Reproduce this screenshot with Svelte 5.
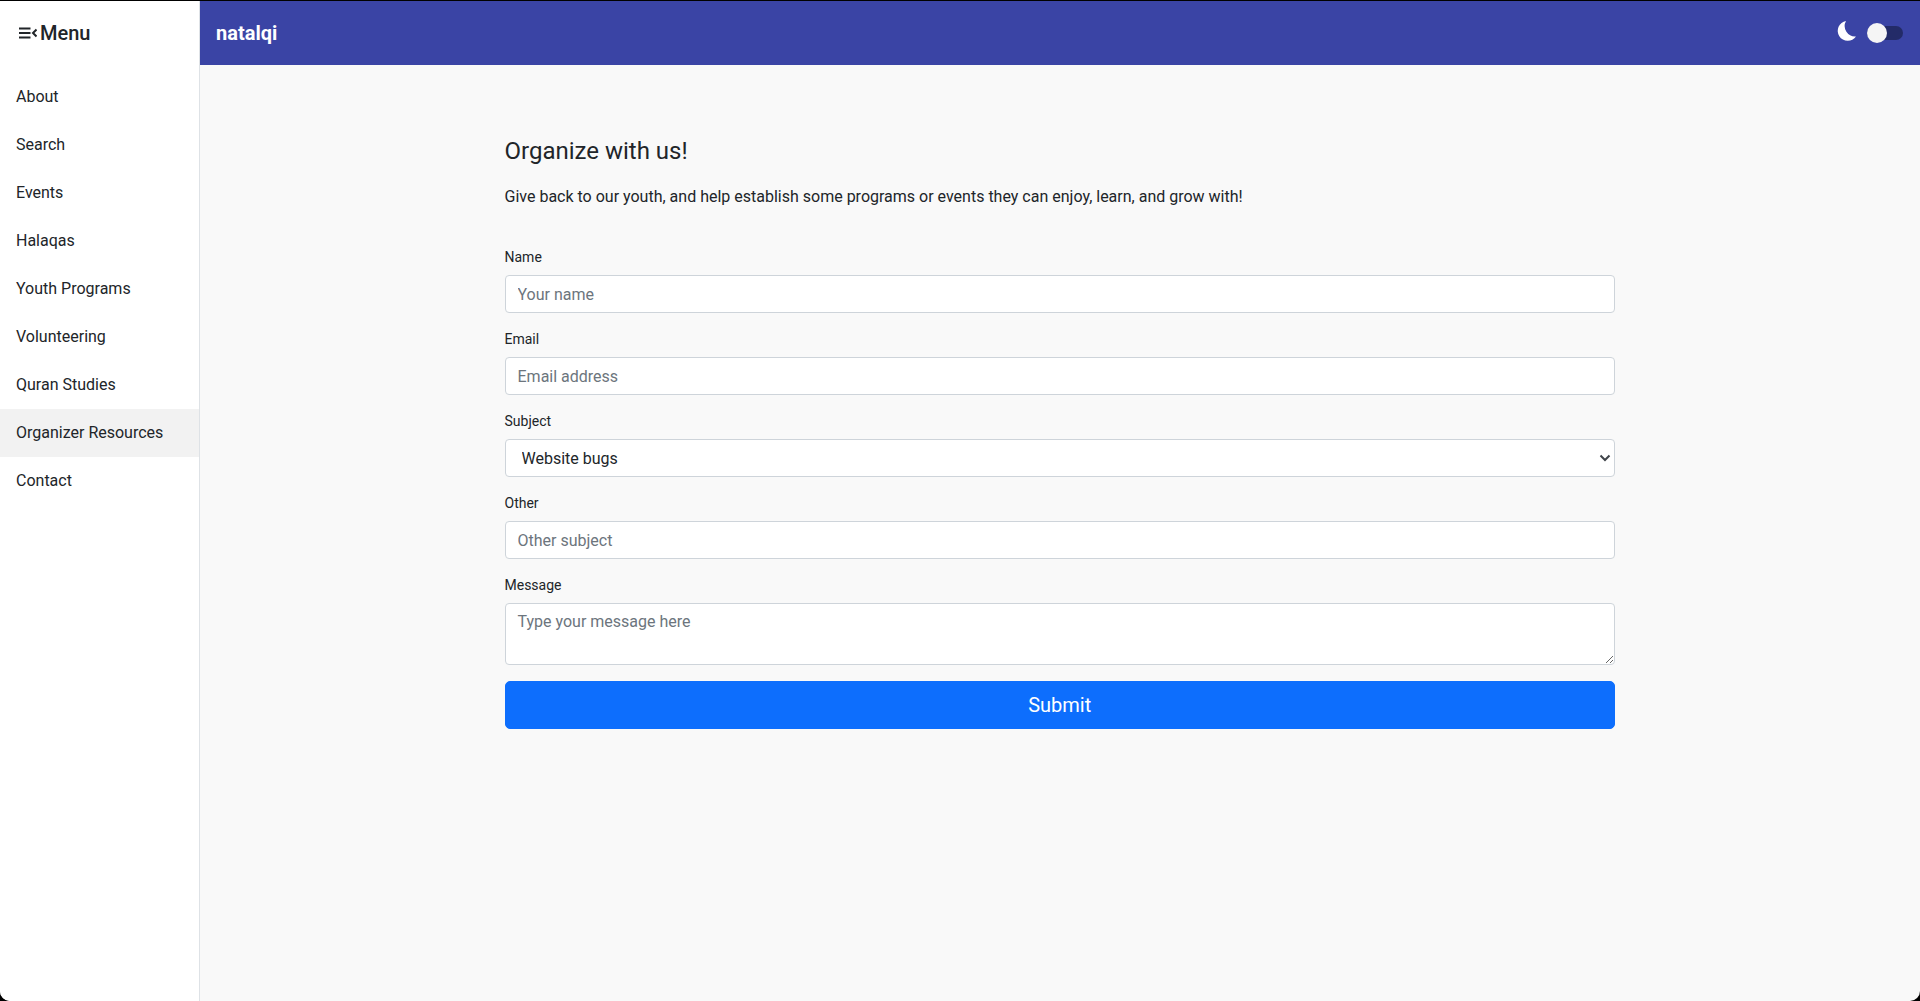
<script lang="ts">
  const links = ['About', 'Search', 'Events', 'Halaqas', 'Youth Programs', 'Volunteering', 'Quran Studies', 'Organizer Resources', 'Contact'];
  const active = 'Organizer Resources';
</script>

<div class="shell">
  <aside class="sidebar">
    <div class="menu-head">
      <svg width="18" height="12" viewBox="0 0 18 12" aria-hidden="true">
        <path d="M0 1.500h11.500M0 6h11.500M0 10.500h11.500M17.500 2.500 14 6l3.500 3.500" fill="none" stroke="#212529" stroke-width="2" />
      </svg>
      <span>Menu</span>
    </div>
    <nav>
      {#each links as link}
        <a href="#{link}" class="nav-link" class:active={link === active}>{link}</a>
      {/each}
    </nav>
  </aside>

  <div class="main">
    <header class="topbar">
      <span class="brand">natalqi</span>
      <div class="mode">
        <svg class="moon" width="20" height="20" viewBox="0 0 20 20" aria-hidden="true">
          <path d="M9 0A10 10 0 1 0 19 15.500 10.500 10.500 0 0 1 9 0z" fill="#fff" />
        </svg>
        <span class="switch"><span class="knob"></span></span>
      </div>
    </header>

    <main class="content">
      <h1>Organize with us!</h1>
      <p>Give back to our youth, and help establish some programs or events they can enjoy, learn, and grow with!</p>

      <form onsubmit={(e) => e.preventDefault()}>
        <label for="name">Name</label>
        <input id="name" type="text" placeholder="Your name" />

        <label for="email">Email</label>
        <input id="email" type="email" placeholder="Email address" />

        <label for="subject">Subject</label>
        <div class="select-wrap">
          <select id="subject">
            <option>Website bugs</option>
            <option>Programs</option>
            <option>Events</option>
          </select>
          <svg class="chevron" width="12" height="8" viewBox="0 0 12 8" aria-hidden="true">
            <path d="M1.500 1.500 6 6l4.500-4.500" fill="none" stroke="#3f444a" stroke-width="2" />
          </svg>
        </div>

        <label for="other">Other</label>
        <input id="other" type="text" placeholder="Other subject" />

        <label for="message">Message</label>
        <textarea id="message" placeholder="Type your message here"></textarea>

        <button type="submit">Submit</button>
      </form>
    </main>
  </div>
</div>

<style>
  :global(body) {
    background: #000;
    overflow: hidden;
  }

  .shell {
    display: flex;
    height: 1000px;
    margin-top: 1px;
    border-radius: 0 0 10px 10px;
    overflow: hidden;
    background: #f9f9f9;
    font-family: Roboto, "Liberation Sans", sans-serif;
    color: #212529;
  }

  .sidebar {
    flex: 0 0 200px;
    box-sizing: border-box;
    background: #fff;
    border-right: 1px solid #dee2e6;
  }

  .menu-head {
    display: flex;
    align-items: center;
    gap: 3px;
    height: 64px;
    padding: 0 0 0 19px;
    margin-bottom: 8px;
    font-size: 20px;
    font-weight: 500;
    line-height: 24px;
  }

  nav {
    display: flex;
    flex-direction: column;
  }

  .nav-link {
    display: block;
    height: 48px;
    padding: 0 16px;
    font-size: 16px;
    line-height: 48px;
    color: #212529;
    text-decoration: none;
  }

  .nav-link.active {
    background: #f2f2f2;
  }

  .main {
    flex: 1;
    display: flex;
    flex-direction: column;
    min-width: 0;
  }

  .topbar {
    display: flex;
    align-items: center;
    justify-content: space-between;
    height: 64px;
    padding: 0 17px 0 16px;
    background: #3a44a5;
    color: #fff;
  }

  .brand {
    font-size: 20px;
    font-weight: 700;
  }

  .mode {
    display: flex;
    align-items: center;
    gap: 10px;
  }

  .moon {
    margin-top: -4px;
  }

  .switch {
    display: block;
    position: relative;
    width: 36px;
    height: 14px;
    border-radius: 7px;
    background: #232b68;
  }

  .knob {
    position: absolute;
    left: 0;
    top: -3px;
    width: 20px;
    height: 20px;
    border-radius: 50%;
    background: #f5f5f5;
  }

  .content {
    width: 1110.5px;
    margin-left: 304.5px;
    padding-top: 71px;
  }

  h1 {
    margin: 0 0 19px;
    font-size: 24px;
    font-weight: 400;
    line-height: 30px;
  }

  p {
    margin: 0 0 38px;
    font-size: 16px;
    line-height: 24px;
  }

  form {
    display: flex;
    flex-direction: column;
  }

  label {
    height: 21px;
    margin-bottom: 7px;
    font-size: 14px;
    line-height: 21px;
  }

  input,
  select,
  textarea {
    box-sizing: border-box;
    width: 100%;
    height: 38px;
    margin: 0;
    padding: 6px 12px;
    border: 1px solid #ced4da;
    border-radius: 4px;
    background: #fff;
    font: 400 16px/24px Roboto, "Liberation Sans", sans-serif;
    color: #212529;
    outline: none;
  }

  input,
  .select-wrap {
    margin-bottom: 16px;
  }

  ::placeholder {
    color: #6c757d;
    opacity: 1;
  }

  .select-wrap {
    position: relative;
  }

  select {
    display: block;
    appearance: none;
    padding: 7px 12px 5px 16px;
  }

  .chevron {
    position: absolute;
    right: 4px;
    top: 15px;
    pointer-events: none;
  }

  textarea {
    display: block;
    height: 62px;
    margin-bottom: 16px;
    resize: vertical;
  }

  button {
    height: 48px;
    border: 1px solid #0d6efd;
    border-radius: 5px;
    background: #0d6efd;
    color: #fff;
    font: 400 20px/30px Roboto, "Liberation Sans", sans-serif;
    cursor: pointer;
  }
</style>
